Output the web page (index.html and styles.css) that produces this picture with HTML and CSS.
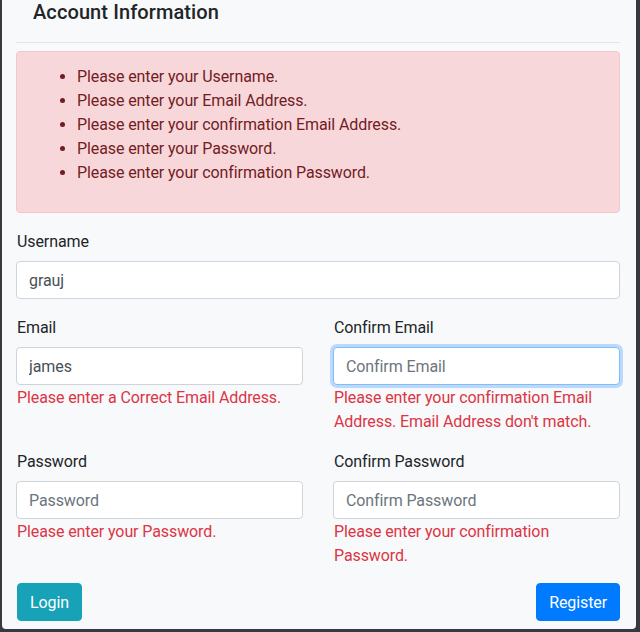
FILE: index.html
```html
<!DOCTYPE html>
<html lang="en">
<head>
<meta charset="utf-8">
<title>Account Information</title>
<link rel="stylesheet" href="styles.css">
</head>
<body>
<div class="card">
  <h4 class="title">Account Information</h4>
  <hr class="divider">
  <div class="alert">
    <ul class="alert-list">
      <li>Please enter your Username.</li>
      <li>Please enter your Email Address.</li>
      <li>Please enter your confirmation Email Address.</li>
      <li>Please enter your Password.</li>
      <li>Please enter your confirmation Password.</li>
    </ul>
  </div>
  <form class="form">
    <div class="form-group">
      <label class="label" for="username">Username</label>
      <input class="input" id="username" type="text" value="grauj">
    </div>
    <div class="row">
      <div class="form-group">
        <label class="label" for="email">Email</label>
        <input class="input" id="email" type="text" value="james">
        <div class="invalid">Please enter a Correct Email Address.</div>
      </div>
      <div class="form-group">
        <label class="label" for="cemail">Confirm Email</label>
        <input class="input input-focus" id="cemail" type="text" placeholder="Confirm Email" autofocus>
        <div class="invalid">Please enter your confirmation Email Address. Email Address don't match.</div>
      </div>
    </div>
    <div class="row">
      <div class="form-group">
        <label class="label" for="pw">Password</label>
        <input class="input" id="pw" type="password" placeholder="Password">
        <div class="invalid">Please enter your Password.</div>
      </div>
      <div class="form-group">
        <label class="label" for="cpw">Confirm Password</label>
        <input class="input" id="cpw" type="password" placeholder="Confirm Password">
        <div class="invalid">Please enter your confirmation Password.</div>
      </div>
    </div>
    <div class="actions">
      <button type="button" class="btn btn-info">Login</button>
      <button type="button" class="btn btn-primary">Register</button>
    </div>
  </form>
</div>
</body>
</html>
```
FILE: styles.css
```css
* { box-sizing: border-box; }

html, body {
  margin: 0;
  padding: 0;
  background: #36393f;
}

body {
  font-family: Roboto, "Liberation Sans", sans-serif;
  font-size: 16px;
  line-height: 24px;
  letter-spacing: -0.1px;
  color: #212529;
}

.card {
  margin: 0 4px 0 2px;
  background: #f8f9fa;
  border-radius: 0 0 4px 4px;
  padding: 0 16px 8px 14px;
}

.title {
  margin: 0;
  padding-left: 17px;
  font-size: 20px;
  font-weight: 500;
  line-height: 25px;
  letter-spacing: 0.1px;
  color: #212529;
}

.divider {
  margin: 17px 0 8px;
  border: 0;
  border-top: 1px solid #e4e5e7;
}

.alert {
  background: #f8d7da;
  border: 1px solid #f5c6cb;
  color: #721c24;
  border-radius: 4px;
  padding: 13px 20px 11px;
  margin-bottom: 16px;
}

.alert-list {
  margin: 0 0 16px;
  padding-left: 40px;
}

.form-group {
  margin-bottom: 16px;
}

.label {
  display: block;
  margin-bottom: 7px;
  padding-top: 1px;
  padding-left: 1px;
}

.row {
  display: grid;
  grid-template-columns: 1fr 1fr;
  column-gap: 30px;
}

.input {
  display: block;
  width: 100%;
  height: 38px;
  padding: 6px 12px;
  font-family: inherit;
  font-size: 16px;
  line-height: 24px;
  letter-spacing: -0.1px;
  color: #495057;
  background: #fff;
  border: 1px solid #ced4da;
  border-radius: 4px;
  outline: none;
}

.input::placeholder {
  color: #6c757d;
  opacity: 1;
}

.input-focus {
  border-color: #80bdff;
  box-shadow: 0 0 0 3px rgba(0, 123, 255, 0.25);
}

.invalid {
  color: #dc3545;
  padding: 1px 0 0 1px;
  margin-bottom: -1px;
}

.actions {
  display: flex;
  justify-content: space-between;
  padding-left: 1px;
}

.btn {
  font-family: inherit;
  font-size: 16px;
  line-height: 24px;
  letter-spacing: -0.1px;
  padding: 7px 12px 5px;
  border: 1px solid transparent;
  border-radius: 4px;
  color: #fff;
  cursor: pointer;
}

.btn-info {
  background: #17a2b8;
  border-color: #17a2b8;
}

.btn-primary {
  background: #007bff;
  border-color: #007bff;
}
```
